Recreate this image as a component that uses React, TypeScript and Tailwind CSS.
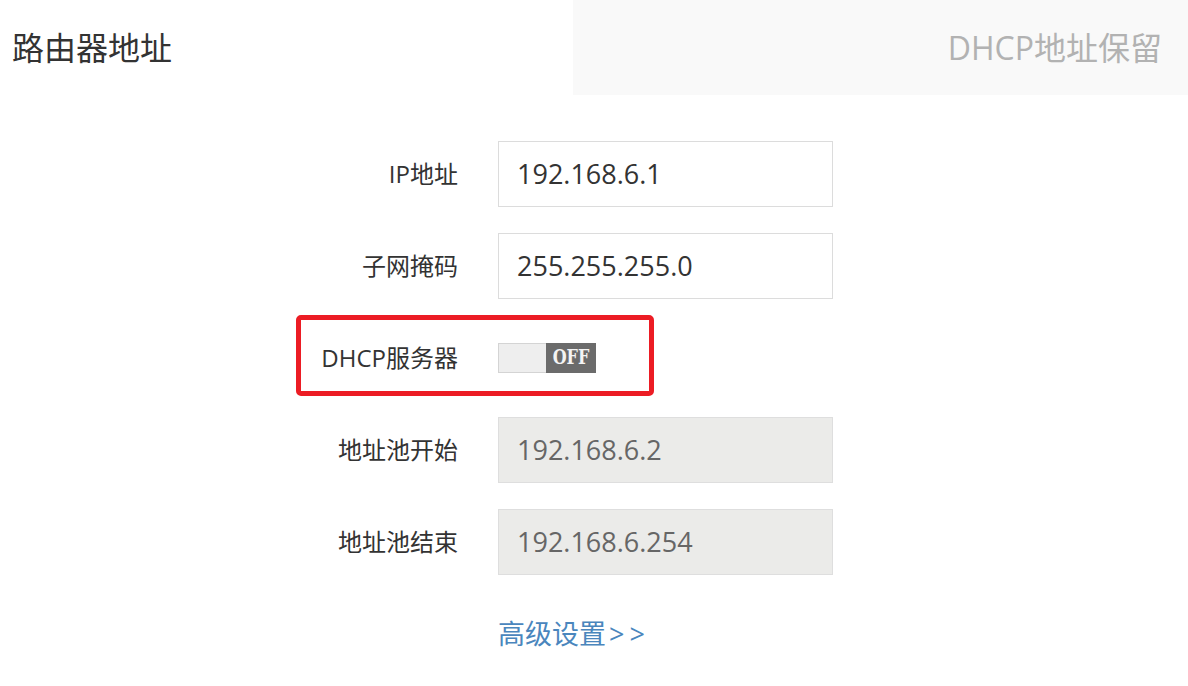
import React from 'react';

const font = { fontFamily: '"Open Sans", "Noto Sans CJK SC", sans-serif' };

function Field({ label, value, disabled }: { label: string; value: string; disabled?: boolean }) {
  return (
    <div className="flex items-center h-[66px]">
      <div className="w-[458px] shrink-0 text-right text-[24px] text-[#333]">{label}</div>
      <div
        className={
          disabled
            ? 'ml-[40px] w-[335px] h-[66px] flex items-center pl-[18px] border border-[#dedede] bg-[#ebebe9] text-[27px] text-[#666]'
            : 'ml-[40px] w-[335px] h-[66px] flex items-center pl-[18px] border border-[#dcdcdc] bg-white text-[27px] text-[#333]'
        }
      >
        {value}
      </div>
    </div>
  );
}

export default function App() {
  return (
    <div className="w-[1188px] h-[686px] bg-white overflow-hidden" style={font}>
      {/* tabs */}
      <div className="flex h-[95px]">
        <div className="w-[573px] flex items-center pl-[12px] text-[32px] text-[#333]">路由器地址</div>
        <div className="flex-1 flex items-center justify-end pr-[26px] bg-[#f9f9f9] text-[32px] text-[#b2b2b2]">
          DHCP地址保留
        </div>
      </div>

      <div className="mt-[46px] flex flex-col gap-[26px]">
        <Field label="IP地址" value="192.168.6.1" />
        <Field label="子网掩码" value="255.255.255.0" />

        <div className="relative flex items-center h-[66px]">
          <div className="w-[458px] shrink-0 text-right text-[24px] text-[#333]">DHCP服务器</div>
          <div className="ml-[40px] flex w-[98px] h-[30px]">
            <div className="w-[48px] h-full bg-[#eeeeee] border border-[#d4d4d4] border-r-0" />
            <div
              className="flex-1 h-full bg-[#6b6b6b] flex items-center justify-center text-[16px] font-bold text-[#f4f4f4]"
              style={{ fontFamily: '"DejaVu Serif", "Liberation Serif", serif' }}
            >
              <span className="inline-block scale-y-125">OFF</span>
            </div>
          </div>
          {/* annotation box */}
          <div className="absolute left-[296px] top-[-10px] w-[358px] h-[81px] border-[5px] border-[#ec1c24] rounded-[5px]" />
        </div>

        <Field label="地址池开始" value="192.168.6.2" disabled />
        <Field label="地址池结束" value="192.168.6.254" disabled />

        <div className="flex items-center h-[66px]">
          <div className="w-[458px] shrink-0" />
          <a className="ml-[40px] text-[27px] text-[#4a86bd] cursor-pointer">
            高级设置<span className="ml-[3px]">&gt;</span>
            <span className="ml-[5px]">&gt;</span>
          </a>
        </div>
      </div>
    </div>
  );
}
